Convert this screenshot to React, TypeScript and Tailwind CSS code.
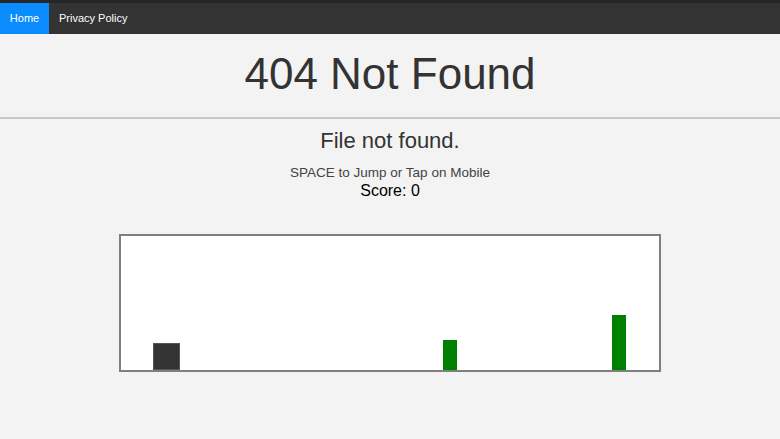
import React from "react";

export default function App() {
  return (
    <div className="min-h-[439px] w-full bg-[#f3f3f3]" style={{ fontFamily: '"Liberation Sans", Arial, sans-serif' }}>
      <div className="h-[3px] bg-[#262626]" />
      <nav className="flex h-[31px] items-stretch bg-[#333333]">
        <a className="flex w-[49px] items-center justify-center bg-[#0a8cff] text-[11px] text-white">Home</a>
        <a className="flex items-center px-[10px] text-[11px] text-white">Privacy Policy</a>
      </nav>
      <h1 className="mt-[15px] text-center text-[44px] leading-[50px] text-[#333333]">404 Not Found</h1>
      <hr className="mt-[18px] border-t-2 border-[#c8c8c8]" />
      <h2 className="mt-[9px] text-center text-[22px] leading-[26px] text-[#333333]">File not found.</h2>
      <p className="mt-[11px] text-center text-[13.5px] leading-[16px] text-[#444444]">SPACE to Jump or Tap on Mobile</p>
      <p className="mt-[1px] text-center text-[16px] leading-[18px] text-black">Score: 0</p>
      <div className="mt-[34px] flex justify-center">
        <div className="relative h-[138px] w-[542px] border-2 border-[#7f7f7f] bg-white">
          <div className="absolute bottom-0 left-[32px] h-[27px] w-[27px] border border-[#555] bg-[#333333]" />
          <div className="absolute bottom-0 left-[322px] h-[30px] w-[14px] bg-[#008000]" />
          <div className="absolute bottom-0 left-[491px] h-[55px] w-[14px] bg-[#008000]" />
        </div>
      </div>
    </div>
  );
}
